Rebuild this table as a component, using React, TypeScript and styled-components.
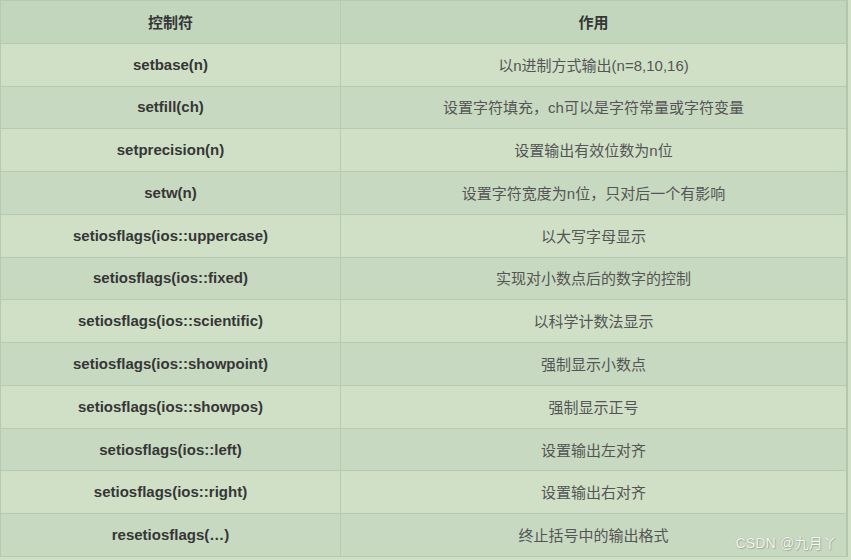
import React, { FC } from "react";
import styled, { createGlobalStyle } from "styled-components";

interface IManipulator {
  name: string;
  effect: string;
}

const rows: IManipulator[] = [
  { name: "setbase(n)", effect: "以n进制方式输出(n=8,10,16)" },
  { name: "setfill(ch)", effect: "设置字符填充，ch可以是字符常量或字符变量" },
  { name: "setprecision(n)", effect: "设置输出有效位数为n位" },
  { name: "setw(n)", effect: "设置字符宽度为n位，只对后一个有影响" },
  { name: "setiosflags(ios::uppercase)", effect: "以大写字母显示" },
  { name: "setiosflags(ios::fixed)", effect: "实现对小数点后的数字的控制" },
  { name: "setiosflags(ios::scientific)", effect: "以科学计数法显示" },
  { name: "setiosflags(ios::showpoint)", effect: "强制显示小数点" },
  { name: "setiosflags(ios::showpos)", effect: "强制显示正号" },
  { name: "setiosflags(ios::left)", effect: "设置输出左对齐" },
  { name: "setiosflags(ios::right)", effect: "设置输出右对齐" },
  { name: "resetiosflags(…)", effect: "终止括号中的输出格式" },
];

const GlobalStyle = createGlobalStyle`
  html, body {
    margin: 0;
    padding: 0;
    background: #cfe0c7;
  }
  body {
    width: 851px;
    height: 560px;
    overflow: hidden;
    font-family: "Liberation Sans", Arial, "Noto Sans CJK SC", sans-serif;
  }
`;

const Page = styled.div`
  position: relative;
  width: 851px;
  height: 560px;
  background: #cfe0c7;
`;

const Table = styled.div`
  display: grid;
  grid-template-columns: 340px 1fr;
  grid-auto-rows: 42.77px;
  width: 848px;
  border-top: 1px solid #b6c9b1;
  border-left: 1px solid #b6c9b1;
  border-right: 2px solid #b3c6ae;
  box-sizing: border-box;
`;

const Cell = styled.div<{ $tone: "head" | "light" | "dark"; $bold?: boolean }>`
  display: flex;
  align-items: center;
  justify-content: center;
  border-bottom: 1px solid #b6c9b1;
  border-right: 1px solid #b9cbb4;
  box-sizing: border-box;
  font-size: 15px;
  padding-bottom: 1px;
  background: ${(p) =>
    p.$tone === "head" ? "#c2d6bd" : p.$tone === "light" ? "#cfe0c7" : "#c7d9c0"};
  color: ${(p) => (p.$bold ? "#363636" : "#555555")};
  font-weight: ${(p) => (p.$bold ? 700 : 400)};

  &:nth-child(2n) {
    border-right: none;
  }
`;

const Watermark = styled.div`
  position: absolute;
  right: 14px;
  bottom: 8px;
  font-size: 14px;
  color: #f6f8f3;
  text-shadow: 0 0 1px #8e9a8a, 1px 1px 1px #a3b09f;
  letter-spacing: 0.2px;
`;

const App: FC = () => (
  <Page>
    <GlobalStyle />
    <Table>
      <Cell $tone="head" $bold>控制符</Cell>
      <Cell $tone="head" $bold>作用</Cell>
      {rows.map((row, i) => {
        const tone = i % 2 === 0 ? "light" : "dark";
        return (
          <React.Fragment key={row.name}>
            <Cell $tone={tone} $bold>
              {row.name}
            </Cell>
            <Cell $tone={tone}>{row.effect}</Cell>
          </React.Fragment>
        );
      })}
    </Table>
    <Watermark>CSDN @九月丫</Watermark>
  </Page>
);

export default App;
